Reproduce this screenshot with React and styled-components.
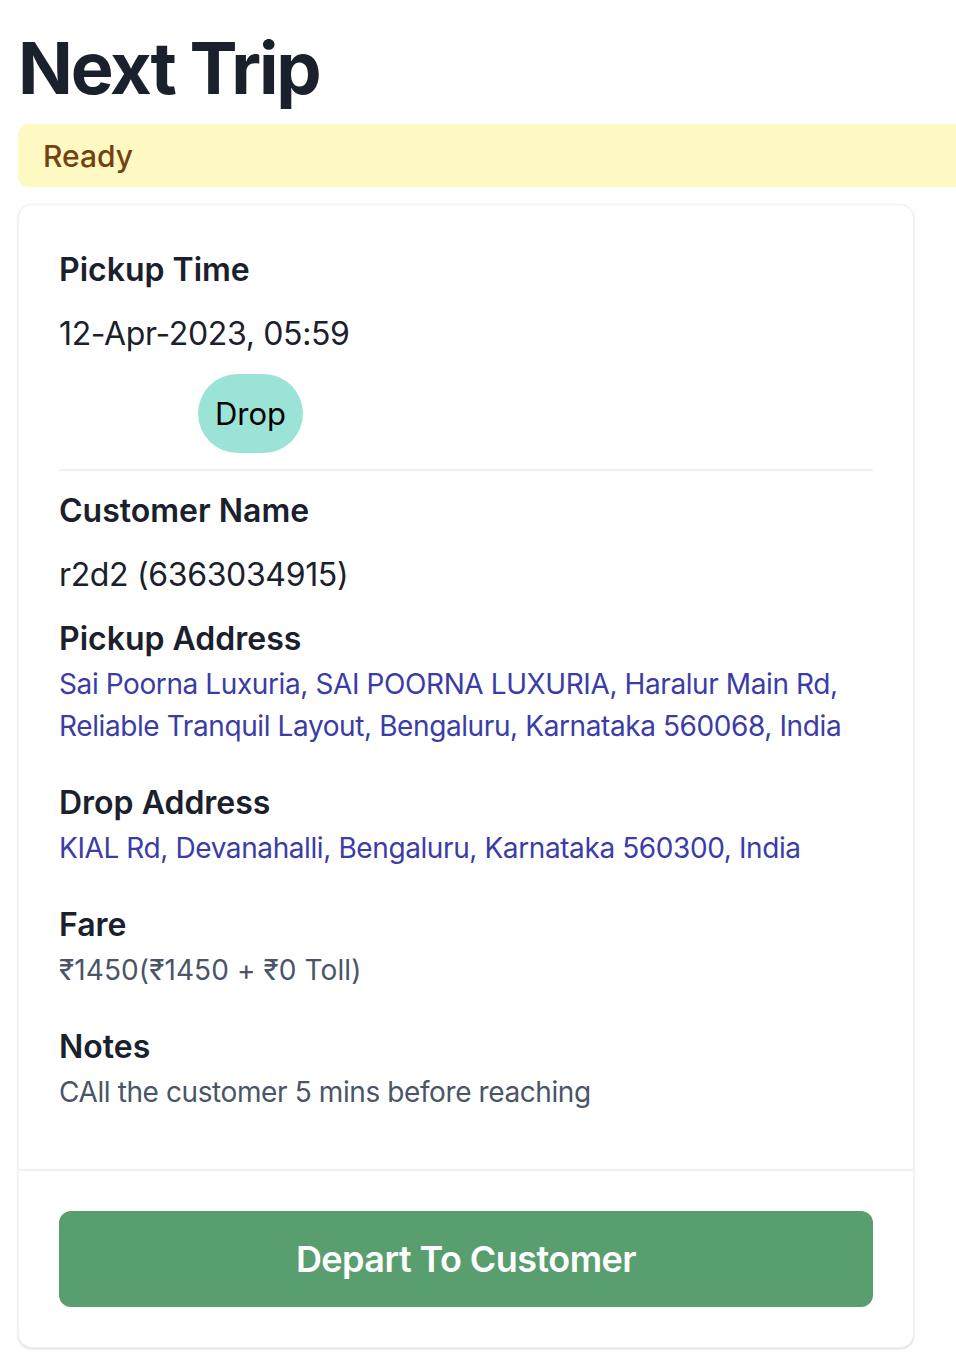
import React from "react";
import styled, { createGlobalStyle } from "styled-components";

const GlobalStyle = createGlobalStyle`
  html, body {
    margin: 0;
    padding: 0;
    background: #ffffff;
    overflow-x: hidden;
  }
  body {
    font-family: Inter, "Noto Sans", "Liberation Sans", sans-serif;
    color: #1a202c;
  }
  * { box-sizing: border-box; }
`;

const Page = styled.div`
  display: flex;
  flex-direction: column;
  align-items: flex-start;
  padding: 25px 0 18px 18px;
`;

const Title = styled.h1`
  margin: 0 0 13px 0;
  font-size: 72px;
  line-height: 86px;
  font-weight: 700;
  letter-spacing: -2.2px;
  color: #1a202c;
`;

const StatusBanner = styled.div`
  width: calc(100% + 40px);
  height: 63px;
  display: flex;
  align-items: center;
  padding-left: 25px;
  background: #fef9c3;
  border-radius: 10px 0 0 10px;
  color: #744210;
  font-size: 30px;
  font-weight: 500;
  margin-bottom: 17px;
`;

const Card = styled.section`
  width: 896px;
  background: #ffffff;
  border-radius: 14px;
  border: 1px solid #f2f2f2;
  box-shadow: 0 1px 3px rgba(0, 0, 0, 0.1), 0 1px 2px rgba(0, 0, 0, 0.06);
  display: flex;
  flex-direction: column;
`;

const CardBody = styled.div`
  padding: 41px 40px 40px 40px;
  display: flex;
  flex-direction: column;
  gap: 16px;
`;

const Field = styled.div`
  display: flex;
  flex-direction: column;
  gap: ${(p) => (p.$tight ? "0" : "16px")};
  margin-bottom: ${(p) => (p.$spaced ? "16px" : "0")};
`;

const Label = styled.div`
  font-size: 32px;
  line-height: 48px;
  font-weight: 600;
  color: #1a202c;
`;

const Value = styled.div`
  font-size: 32px;
  line-height: 48px;
  font-weight: 400;
  letter-spacing: -0.35px;
  color: #1a202c;
`;

const SmallText = styled.div`
  font-size: 28px;
  line-height: 42px;
  letter-spacing: ${(p) => (p.$loose ? "0.1px" : "-0.4px")};
  color: ${(p) => (p.$tone === "link" ? "#3b3ca6" : "#4a5568")};
`;

const PillRow = styled.div`
  display: flex;
  padding-left: 139px;
`;

const Pill = styled.span`
  display: inline-flex;
  align-items: center;
  justify-content: center;
  height: 79px;
  padding: 0 17px;
  border-radius: 40px;
  background: #9be3d7;
  color: #000000;
  font-size: 31px;
  line-height: 48px;
`;

const Divider = styled.hr`
  border: 0;
  height: 2px;
  margin: 0;
  background: #edf1f5;
`;

const CardFooter = styled.div`
  border-top: 2px solid #edf1f5;
  padding: 40px;
  display: flex;
`;

const PrimaryButton = styled.button`
  flex: 1;
  height: 96px;
  border: 0;
  border-radius: 12px;
  background: #589e6f;
  color: #ffffff;
  font-family: inherit;
  font-size: 36px;
  font-weight: 600;
  letter-spacing: -0.55px;
  cursor: pointer;
`;

export default function App() {
  return (
    <>
      <GlobalStyle />
      <Page>
        <Title>Next Trip</Title>
        <StatusBanner>Ready</StatusBanner>
        <Card>
          <CardBody>
            <Label>Pickup Time</Label>
            <Value>12-Apr-2023, 05:59</Value>
            <PillRow>
              <Pill>Drop</Pill>
            </PillRow>
            <Divider />
            <Label>Customer Name</Label>
            <Value>r2d2 (6363034915)</Value>
            <Field $tight $spaced>
              <Label>Pickup Address</Label>
              <SmallText $tone="link">
                Sai Poorna Luxuria, SAI POORNA LUXURIA, Haralur Main Rd, Reliable Tranquil Layout, Bengaluru, Karnataka 560068, India
              </SmallText>
            </Field>
            <Field $tight $spaced>
              <Label>Drop Address</Label>
              <SmallText $tone="link">
                KIAL Rd, Devanahalli, Bengaluru, Karnataka 560300, India
              </SmallText>
            </Field>
            <Field $tight $spaced>
              <Label>Fare</Label>
              <SmallText $loose>₹1450(₹1450 + ₹0 Toll)</SmallText>
            </Field>
            <Field $tight $spaced>
              <Label>Notes</Label>
              <SmallText>CAll the customer 5 mins before reaching</SmallText>
            </Field>
          </CardBody>
          <CardFooter>
            <PrimaryButton>Depart To Customer</PrimaryButton>
          </CardFooter>
        </Card>
      </Page>
    </>
  );
}
